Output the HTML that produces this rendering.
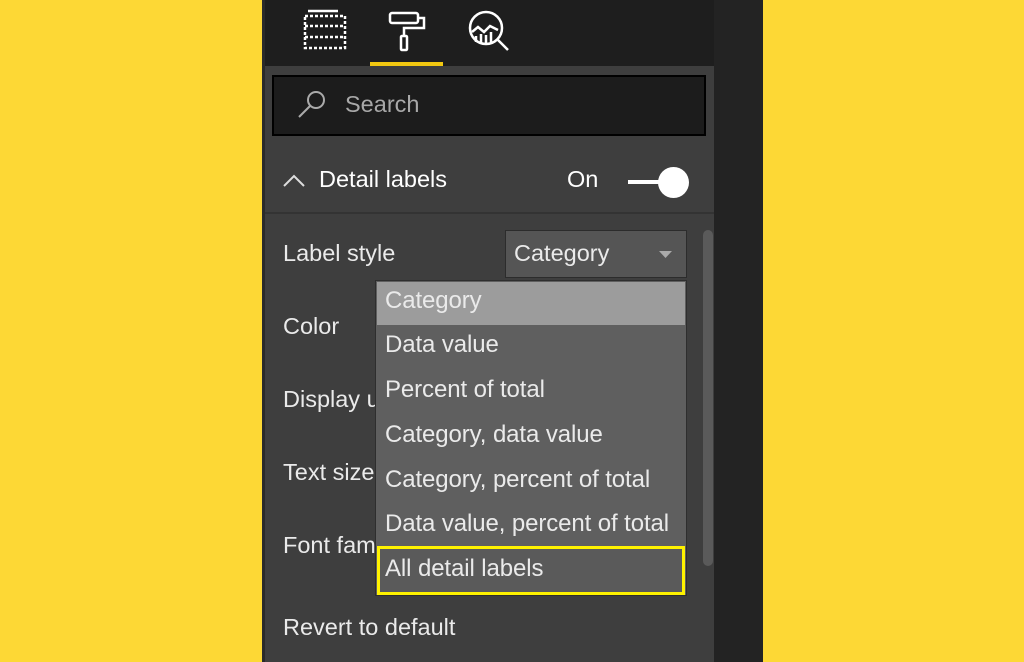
<!DOCTYPE html>
<html><head><style>
body{margin:0;width:1024px;height:662px;background:#FDD835;position:relative;overflow:hidden;font-family:"Liberation Sans",sans-serif;color:#eaeaea}
div{position:absolute;box-sizing:border-box}
.t{font-size:23.5px;white-space:nowrap}
.d{font-size:24px;letter-spacing:-0.1px}
</style></head><body>
<div style="left:262px;top:0;width:453px;height:662px;background:#3e3e3e"></div>
<div style="left:262px;top:0;width:453px;height:66px;background:#1e1e1e"></div>
<div style="left:714px;top:0;width:49px;height:662px;background:#232323"></div>
<div style="left:262px;top:0;width:3px;height:662px;background:#2a2a2a"></div>
<svg style="position:absolute;left:300px;top:8px" width="220" height="50" viewBox="0 0 220 50">
<g fill="none" stroke="#fff" stroke-width="2.5">
<line x1="8" y1="3" x2="38" y2="3"/>
<rect x="5" y="8" width="40" height="32" stroke-dasharray="3 2"/>
<line x1="5" y1="18" x2="45" y2="18" stroke-dasharray="3 2"/>
<line x1="5" y1="29" x2="45" y2="29" stroke-dasharray="3 2"/>
<rect x="90" y="5" width="28" height="10" rx="2"/>
<path d="M118 10h6v10h-20v8"/>
<rect x="101" y="28" width="6" height="14" rx="1"/>
<circle cx="186" cy="20" r="16"/>
<path d="M172 24l6-5 6 5 6-6 8 4M176 28v6M181 26v9M186 27v8M191 24v10M198 32l10 10" stroke-width="2.5"/>
</g></svg>
<div style="left:370px;top:62px;width:73px;height:4px;background:#F2C811"></div>
<div style="left:272px;top:75px;width:434px;height:61px;background:#1c1c1c;border:2px solid #000"></div>
<svg style="position:absolute;left:295px;top:88px" width="34" height="34"><circle cx="21" cy="12" r="8" fill="none" stroke="#aaa" stroke-width="2"/><line x1="15" y1="18" x2="4" y2="29" stroke="#aaa" stroke-width="2"/></svg>
<div class="t" style="left:345px;top:91px;color:#a8a8a8">Search</div>
<svg style="position:absolute;left:282px;top:172px" width="24" height="16"><path d="M2 14L12 4l10 10" fill="none" stroke="#ddd" stroke-width="2"/></svg>
<div class="t" style="left:319px;top:166px;color:#fff">Detail labels</div>
<div class="t" style="left:567px;top:166px;color:#fff">On</div>
<div style="left:628px;top:180px;width:40px;height:4px;background:#fff"></div>
<div style="left:658px;top:167px;width:31px;height:31px;border-radius:50%;background:#fff"></div>
<div style="left:265px;top:212px;width:449px;height:2px;background:#333"></div>
<div class="t" style="left:283px;top:240px">Label style</div>
<div class="t" style="left:283px;top:313px">Color</div>
<div class="t" style="left:283px;top:386px">Display u</div>
<div class="t" style="left:283px;top:459px">Text size</div>
<div class="t" style="left:283px;top:532px">Font fam</div>
<div class="t" style="left:283px;top:614px">Revert to default</div>
<div style="left:505px;top:230px;width:182px;height:48px;background:#555;border:1px solid #2c2c2c"></div>
<div class="t" style="left:514px;top:240px">Category</div>
<svg style="position:absolute;left:658px;top:250px" width="16" height="10"><path d="M1 1h13l-6.5 7z" fill="#aaa"/></svg>
<div style="left:703px;top:230px;width:10px;height:336px;background:#5a5a5a;border-radius:5px"></div>
<div style="left:375px;top:280px;width:312px;height:316px;background:#5f5f5f;border:1px solid #2e2e2e"></div>
<div style="left:377px;top:282px;width:308px;height:43px;background:#9c9c9c"></div>
<div class="t d" style="left:385px;top:287px">Category</div>
<div class="t d" style="left:385px;top:331px">Data value</div>
<div class="t d" style="left:385px;top:376px">Percent of total</div>
<div class="t d" style="left:385px;top:421px">Category, data value</div>
<div class="t d" style="left:385px;top:466px">Category, percent of total</div>
<div class="t d" style="left:385px;top:510px">Data value, percent of total</div>
<div style="left:377px;top:546px;width:308px;height:49px;border:3px solid #FFF200;background:#5a5a5a"></div>
<div class="t d" style="left:385px;top:555px">All detail labels</div>
</body></html>
